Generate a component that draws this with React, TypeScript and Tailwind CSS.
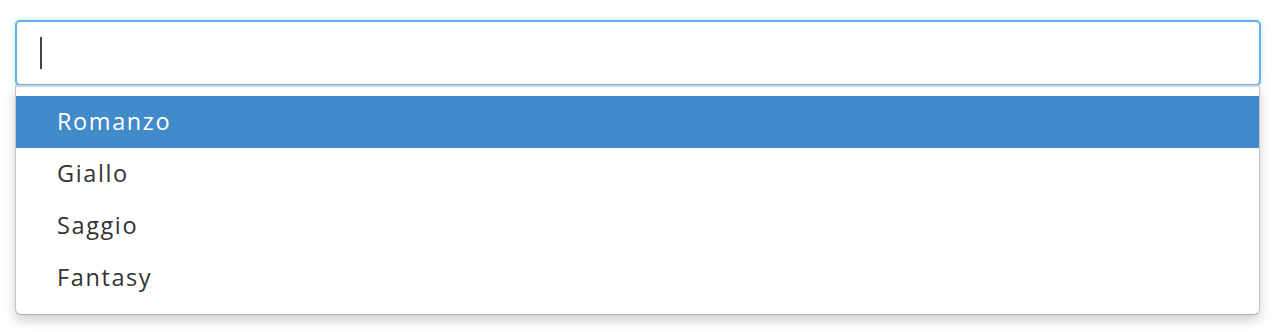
import React from "react";

export default function App() {
  const options = ["Romanzo", "Giallo", "Saggio", "Fantasy"];
  return (
    <div className="w-[1280px] h-[332px] bg-white pt-[20px] pl-[15px] pr-[19px]" style={{ fontFamily: '"Open Sans", "Lato", sans-serif' }}>
      <div className="h-[66px] rounded-[5px] border-2 border-[#66afe9] bg-white shadow-[0_0_6px_rgba(102,233,175,0.45)] flex items-center pl-[23px]">
        <div className="w-[2px] h-[32px] bg-[#444]" />
      </div>
      <div className="mr-[1px] -mt-[1px] rounded-b-[6px] border border-t-2 border-[#c4c4c4] border-t-[#d6d6d6] border-b-[#b0b0b0] bg-white pt-[9px] pb-[10px] shadow-[0_6px_12px_rgba(0,0,0,0.18)]">
        {options.map((o, i) => (
          <div
            key={o}
            className={
              "h-[52px] flex items-center pl-[41px] pb-[1px] text-[23.5px] tracking-[1.6px] " +
              (i === 0 ? "bg-[#428bca] text-white" : "text-[#333]")
            }
          >
            {o}
          </div>
        ))}
      </div>
    </div>
  );
}
